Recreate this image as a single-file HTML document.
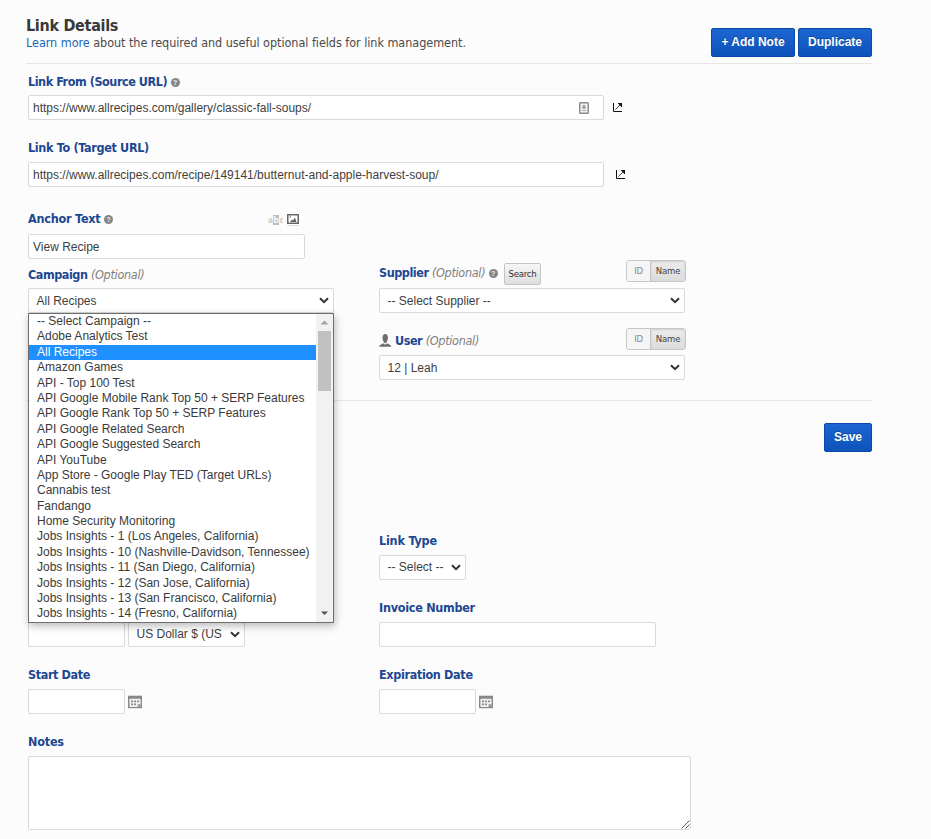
<!DOCTYPE html>
<html lang="en">
<head>
<meta charset="utf-8">
<title>Link Details</title>
<style>
*{box-sizing:border-box;margin:0;padding:0}
html,body{width:931px;height:839px;overflow:hidden;background:#fcfcfc}
body{position:relative;font-family:"Liberation Sans",sans-serif;color:#333}
.abs{position:absolute;white-space:nowrap}
.os{font-family:"DejaVu Sans Condensed","DejaVu Sans","Liberation Sans",sans-serif}
h1{position:absolute;left:26px;top:14px;font-size:16px;line-height:23px;font-weight:bold;color:#383838;letter-spacing:-0.3px}
.sub{left:26px;top:35px;font-size:12.5px;line-height:16px;color:#4a4a4a;letter-spacing:-0.04px}
.sub a{color:#2068b8;text-decoration:none}
.hr{position:absolute;left:26px;width:846px;height:1px;background:#e6e6e6}
.btn{position:absolute;height:29px;border:1px solid #0d4aa8;border-radius:2px;background:linear-gradient(#1b66d2,#0e52ba);color:#fff;text-shadow:0 -1px 0 rgba(0,0,0,.3);font-weight:bold;font-size:12px;line-height:27px;text-align:center;font-family:"Liberation Sans",sans-serif}
.lbl{position:absolute;white-space:nowrap;font-size:12.5px;line-height:16px;font-weight:bold;color:#1d4791;letter-spacing:-0.45px;margin-left:-1px}
.lbl i{font-weight:normal;color:#808080;font-style:italic;letter-spacing:-0.3px}
.inp{position:absolute;height:25px;background:#fff;border:1px solid #d9d9d9;border-radius:2px;font-size:12px;line-height:24px;padding-left:4px;color:#3e3e3e;white-space:nowrap;overflow:hidden}
.sel{padding-left:7.5px}
.chev{position:absolute;right:4px;top:8px}
.q{display:inline-block;width:9px;height:9px;border-radius:50%;background:#858585;color:#eee;font-size:7px;line-height:9px;text-align:center;font-weight:bold;vertical-align:1px;letter-spacing:0;font-family:"Liberation Sans",sans-serif;font-style:normal}
.tog{position:absolute;height:22px;width:60px;border:1px solid #c6c6c6;border-radius:3px;background:#f2f2f2;font-size:9.5px;line-height:20px;color:#444;overflow:hidden;letter-spacing:-0.2px}
.tog span{position:absolute;top:0;height:20px;text-align:center}
.tog .id{left:0;width:24px;color:#888;background:#f5f5f5;border-right:1px solid #c6c6c6}
.tog .nm{left:24px;width:34px;background:linear-gradient(#ececec,#dcdcdc);box-shadow:inset 0 1px 2px rgba(0,0,0,.12)}
.sbtn{position:absolute;left:504px;top:263px;width:37px;height:22px;border:1px solid #c4c4c4;border-radius:2px;background:linear-gradient(#f6f6f6,#dedede);font-size:9.5px;line-height:20px;text-align:center;color:#333;letter-spacing:-0.2px}
.dd{position:absolute;left:28px;top:313px;width:306px;height:310px;background:#fff;border:1px solid #6e6e6e;box-shadow:1px 3px 8px rgba(0,0,0,.27);font-size:12px;color:#3a3a3a}
.dd div.o{position:absolute;left:0;width:287px;height:15px;line-height:15px;padding-left:8px;white-space:nowrap}
.dd div.s{background:#1e90ff;color:#fff}
</style>
</head>
<body>
<h1 class="os">Link Details</h1>
<div class="abs sub os"><a>Learn more</a> about the required and useful optional fields for link management.</div>
<div class="btn" style="left:711px;top:28px;width:84px">+ Add Note</div>
<div class="btn" style="left:798px;top:28px;width:74px">Duplicate</div>
<div class="hr" style="top:63px"></div>

<div class="lbl os" style="left:29px;top:74px">Link From (Source URL) <span class="q">?</span></div>
<div class="inp" style="left:28px;top:95px;width:576px">https://www.allrecipes.com/gallery/classic-fall-soups/</div>
<div class="lbl os" style="left:29px;top:140px;letter-spacing:-0.33px">Link To (Target URL)</div>
<div class="inp" style="left:28px;top:162px;width:576px">https://www.allrecipes.com/recipe/149141/butternut-and-apple-harvest-soup/</div>

<div class="lbl os" style="left:29px;top:211px;letter-spacing:-0.21px">Anchor Text <span class="q">?</span></div>
<div class="inp" style="left:28px;top:234px;width:277px">View Recipe</div>

<div class="lbl os" style="left:29px;top:267px">Campaign <i>(Optional)</i></div>
<div class="inp sel" style="left:28px;top:288px;width:306px">All Recipes<svg class="chev" viewBox="0 0 10 7" width="10" height="7"><path d="M1 1.2L5 5.2L9 1.2" fill="none" stroke="#333" stroke-width="2"/></svg></div>

<div class="lbl os" style="left:380px;top:265px">Supplier <i>(Optional)</i> <span class="q">?</span></div>
<div class="inp sel" style="left:379px;top:288px;width:306px">-- Select Supplier --<svg class="chev" viewBox="0 0 10 7" width="10" height="7"><path d="M1 1.2L5 5.2L9 1.2" fill="none" stroke="#333" stroke-width="2"/></svg></div>
<div class="lbl os" style="left:396px;top:333px">User <i>(Optional)</i></div>
<div class="inp sel" style="left:379px;top:355px;width:306px">12 | Leah<svg class="chev" viewBox="0 0 10 7" width="10" height="7"><path d="M1 1.2L5 5.2L9 1.2" fill="none" stroke="#333" stroke-width="2"/></svg></div>
<div class="tog os" style="left:626px;top:260px"><span class="id">ID</span><span class="nm">Name</span></div>
<div class="tog os" style="left:626px;top:328px"><span class="id">ID</span><span class="nm">Name</span></div>


<svg class="abs" style="left:613px;top:103px" width="9" height="9" viewBox="0 0 9 9"><path d="M0.5 0v8.5h8.5" stroke="#111" fill="none"/><path d="M4.6 0h4.4v4.4z" fill="#111"/><path d="M2.4 6.6L7.4 1.6" stroke="#444" stroke-width="1"/></svg>
<svg class="abs" style="left:616px;top:170px" width="9" height="9" viewBox="0 0 9 9"><path d="M0.5 0v8.5h8.5" stroke="#111" fill="none"/><path d="M4.6 0h4.4v4.4z" fill="#111"/><path d="M2.4 6.6L7.4 1.6" stroke="#444" stroke-width="1"/></svg>
<svg class="abs" style="left:579px;top:102px" width="10" height="12" viewBox="0 0 10 12"><rect x="0.7" y="0.7" width="8.6" height="10.6" rx="1.2" fill="#f0f0f0" stroke="#8e8e8e" stroke-width="1.5"/><circle cx="5" cy="4" r="1.1" fill="#888"/><rect x="3.3" y="5" width="3.4" height="1.3" fill="#888"/><rect x="3" y="7.6" width="4" height="1.4" fill="#bbb"/></svg>
<div class="abs" style="left:268px;top:213px;width:14.5px;height:13px;overflow:hidden;font-size:8.5px;font-weight:bold;line-height:13px;color:#c6c6c6;letter-spacing:0"><span style="position:absolute;left:5px;top:2px;width:6px;height:10px;background:#bdbdbd"></span><span style="position:absolute;left:0;top:1px">a</span><span style="position:absolute;left:5.5px;top:1px;color:#fff">b</span><span style="position:absolute;left:11.5px;top:1px">c</span></div>
<svg class="abs" style="left:287px;top:214px" width="12" height="12" viewBox="0 0 12 12"><rect x="0.75" y="0.75" width="10.5" height="8.5" fill="#fff" stroke="#666" stroke-width="1.5"/><path d="M3 8l2-2.5 1 1 2-3 1.5 4.5z" fill="#666"/><circle cx="3.3" cy="3" r="0.7" fill="#666"/><rect x="0" y="11" width="12" height="1" fill="#e0e0e0"/></svg>
<div class="sbtn os">Search</div>
<svg class="abs" style="left:379.2px;top:334px" width="13" height="13" viewBox="0 0 13 13"><path d="M6.2 0C8 0 8.9 1.5 8.9 3.5C8.9 6 7.5 9.2 6.2 9.2C4.9 9.2 3.5 6 3.5 3.5C3.5 1.5 4.4 0 6.2 0Z" fill="#6e6e6e"/><path d="M0.3 12.7V11.8C1.5 10.5 3.5 9.9 4.5 9.2C5 10.1 5.6 10.5 6.2 10.5C6.8 10.5 7.4 10.1 7.9 9.2C8.9 9.9 10.9 10.5 12.1 11.8V12.7Z" fill="#6e6e6e"/></svg>
<div class="hr" style="top:400px"></div>
<div class="btn" style="left:824px;top:423px;width:48px">Save</div>

<div class="lbl os" style="left:380px;top:533px;letter-spacing:-0.2px">Link Type</div>
<div class="inp sel" style="left:379px;top:555px;width:87px;line-height:22px">-- Select --<svg class="chev" viewBox="0 0 10 7" width="10" height="7"><path d="M1 1.2L5 5.2L9 1.2" fill="none" stroke="#333" stroke-width="2"/></svg></div>
<div class="lbl os" style="left:380px;top:600px;letter-spacing:-0.27px">Invoice Number</div>
<div class="inp" style="left:379px;top:622px;width:277px"></div>
<div class="inp" style="left:28px;top:622px;width:97px"></div>
<div class="inp sel" style="left:128px;top:622px;width:117px;line-height:22px">US Dollar $ (US<svg class="chev" viewBox="0 0 10 7" width="10" height="7"><path d="M1 1.2L5 5.2L9 1.2" fill="none" stroke="#333" stroke-width="2"/></svg></div>
<div class="lbl os" style="left:29px;top:667px;letter-spacing:-0.38px">Start Date</div>
<div class="inp" style="left:28px;top:689px;width:97px"></div>
<div class="lbl os" style="left:380px;top:667px;letter-spacing:-0.34px">Expiration Date</div>
<div class="inp" style="left:379px;top:689px;width:97px"></div>
<div class="lbl os" style="left:29px;top:734px;letter-spacing:-0.2px">Notes</div>
<div class="inp" style="left:28px;top:756px;width:663px;height:74px"></div>

<svg class="abs" style="left:128px;top:695px" width="14" height="14" viewBox="0 0 14 14"><g transform="translate(0,0.7)"><rect x="0" y="0" width="14" height="12.5" fill="#888"/><rect x="1.4" y="3" width="11.2" height="8.3" rx="0.8" fill="#f1f1f1"/><g fill="#8c8c8c"><rect x="3" y="4.8" width="2" height="1.7"/><rect x="6" y="4.8" width="2" height="1.7"/><rect x="9" y="4.8" width="2" height="1.7"/><rect x="3" y="7.8" width="2" height="1.7"/><rect x="6" y="7.8" width="2" height="1.7"/><rect x="9.6" y="8.5" width="3" height="2.8" fill="#999"/></g></g></svg>
<svg class="abs" style="left:479px;top:695px" width="14" height="14" viewBox="0 0 14 14"><g transform="translate(0,0.7)"><rect x="0" y="0" width="14" height="12.5" fill="#888"/><rect x="1.4" y="3" width="11.2" height="8.3" rx="0.8" fill="#f1f1f1"/><g fill="#8c8c8c"><rect x="3" y="4.8" width="2" height="1.7"/><rect x="6" y="4.8" width="2" height="1.7"/><rect x="9" y="4.8" width="2" height="1.7"/><rect x="3" y="7.8" width="2" height="1.7"/><rect x="6" y="7.8" width="2" height="1.7"/><rect x="9.6" y="8.5" width="3" height="2.8" fill="#999"/></g></g></svg>
<svg class="abs" style="left:680px;top:819px" width="10" height="10" viewBox="0 0 10 10"><path d="M1.5 9.5L9.5 1.5M5.5 9.5L9.5 5.5" stroke="#555" stroke-width="1" fill="none"/></svg>
<div class="dd">
<div class="o" style="top:0px">-- Select Campaign --</div>
<div class="o" style="top:15px">Adobe Analytics Test</div>
<div class="o s" style="top:31px">All Recipes</div>
<div class="o" style="top:46px">Amazon Games</div>
<div class="o" style="top:62px">API - Top 100 Test</div>
<div class="o" style="top:77px">API Google Mobile Rank Top 50 + SERP Features</div>
<div class="o" style="top:92px">API Google Rank Top 50 + SERP Features</div>
<div class="o" style="top:108px">API Google Related Search</div>
<div class="o" style="top:123px">API Google Suggested Search</div>
<div class="o" style="top:139px">API YouTube</div>
<div class="o" style="top:154px">App Store - Google Play TED (Target URLs)</div>
<div class="o" style="top:169px">Cannabis test</div>
<div class="o" style="top:185px">Fandango</div>
<div class="o" style="top:200px">Home Security Monitoring</div>
<div class="o" style="top:215px">Jobs Insights - 1 (Los Angeles, California)</div>
<div class="o" style="top:231px">Jobs Insights - 10 (Nashville-Davidson, Tennessee)</div>
<div class="o" style="top:246px">Jobs Insights - 11 (San Diego, California)</div>
<div class="o" style="top:262px">Jobs Insights - 12 (San Jose, California)</div>
<div class="o" style="top:277px">Jobs Insights - 13 (San Francisco, California)</div>
<div class="o" style="top:292px">Jobs Insights - 14 (Fresno, California)</div>
<div style="position:absolute;left:287px;top:0;width:17px;height:308px;background:#f1f1f1"></div>
<div style="position:absolute;left:289px;top:17px;width:13px;height:60px;background:#c1c1c1"></div>
<svg style="position:absolute;left:291px;top:6px" width="9" height="5" viewBox="0 0 9 5"><path d="M0.5 4.5L4.5 0.5L8.5 4.5z" fill="#a3a3a3"/></svg>
<svg style="position:absolute;left:291px;top:297px" width="9" height="5" viewBox="0 0 9 5"><path d="M1 0.5L4.5 4L8 0.5z" fill="#505050"/></svg>
</div>
</body>
</html>
